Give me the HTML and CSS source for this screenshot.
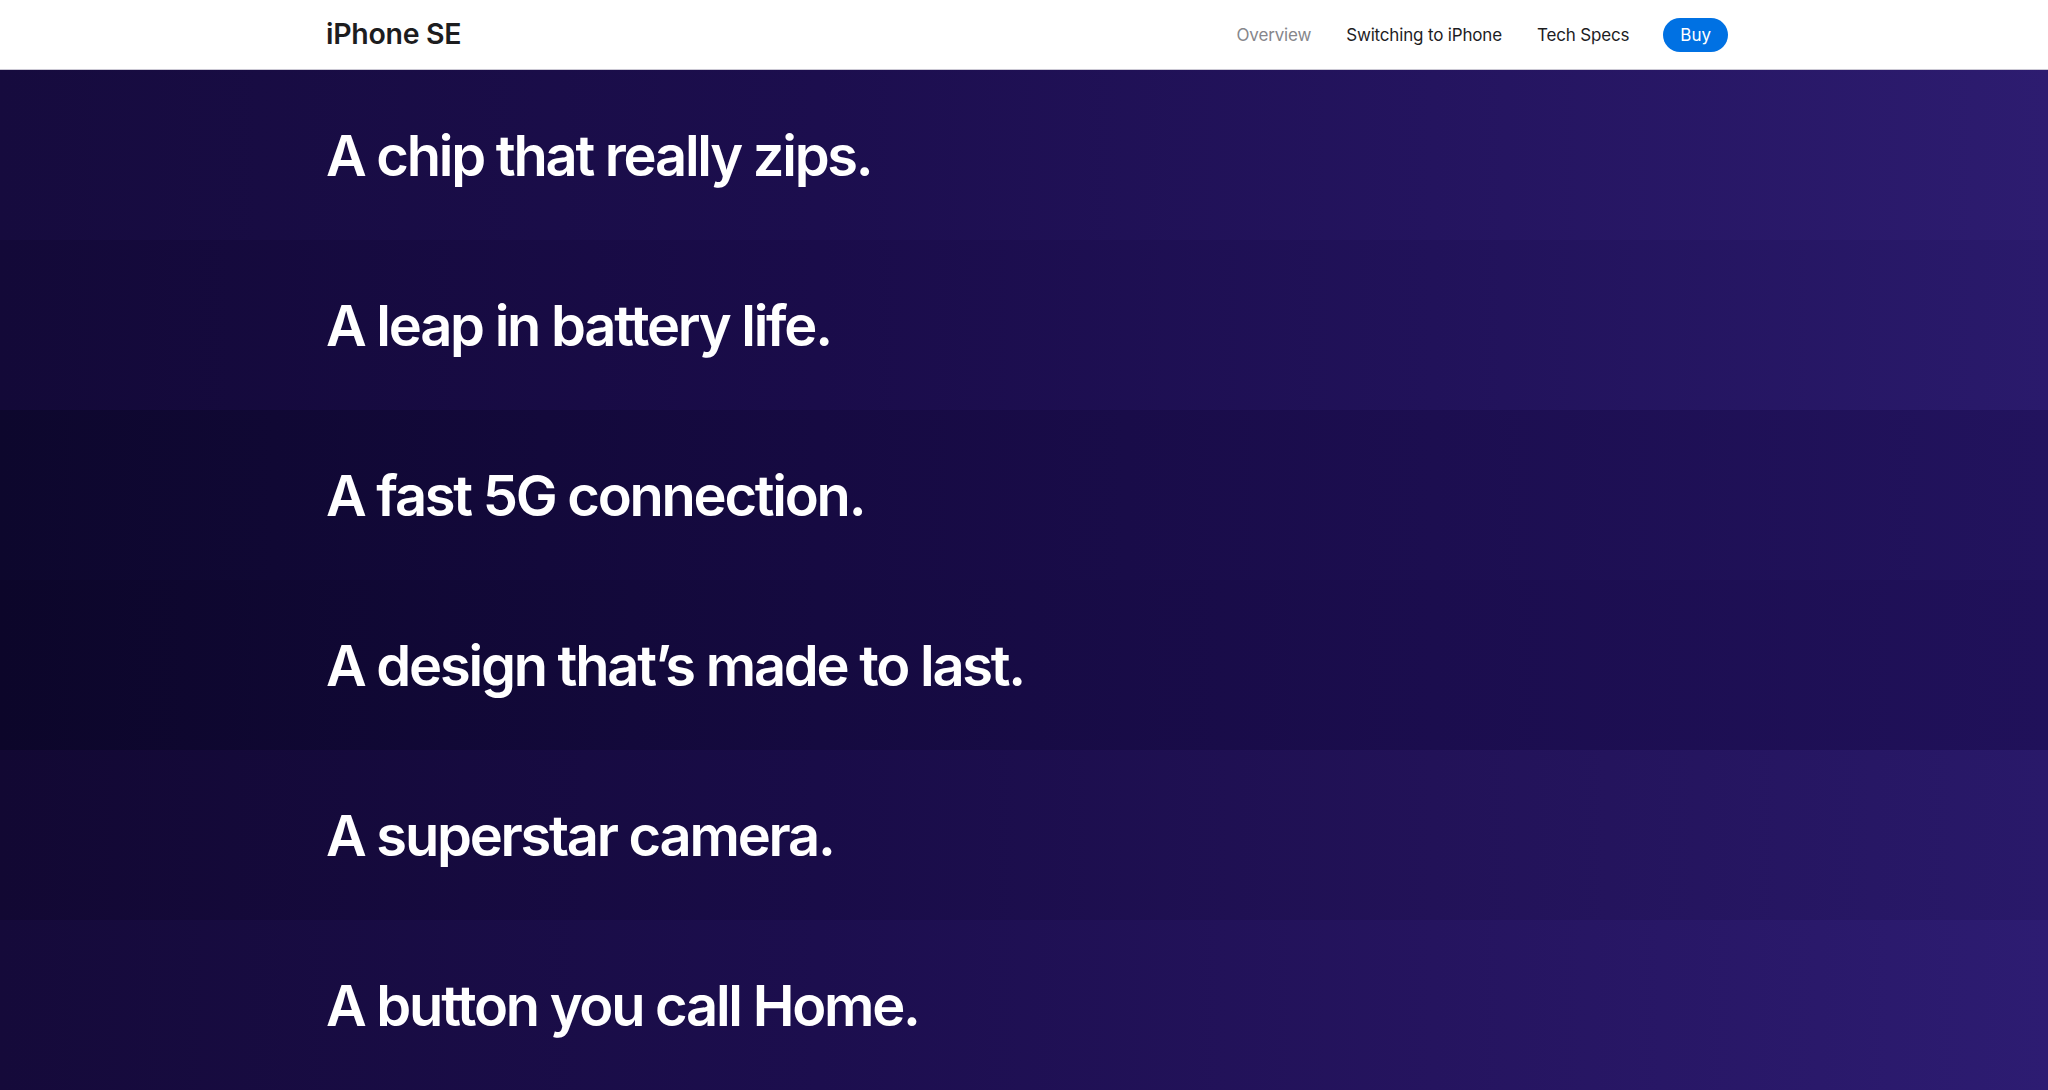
FILE: index.html
```html
<!DOCTYPE html>
<html lang="en">
<head>
<meta charset="utf-8">
<title>iPhone SE</title>
<link rel="stylesheet" href="styles.css">
</head>
<body>
<header class="localnav">
  <div class="localnav-inner">
    <a class="product-title" href="#">iPhone SE</a>
    <nav class="localnav-menu">
      <a class="localnav-link current" href="#">Overview</a>
      <a class="localnav-link" href="#">Switching to iPhone</a>
      <a class="localnav-link" href="#">Tech Specs</a>
      <a class="buy-button" href="#">Buy</a>
    </nav>
  </div>
</header>
<main class="features">
  <section class="band band-1"><div class="band-inner"><h2 class="headline">A chip that really zips.</h2></div></section>
  <section class="band band-2"><div class="band-inner"><h2 class="headline">A leap in battery life.</h2></div></section>
  <section class="band band-3"><div class="band-inner"><h2 class="headline">A fast 5G connection.</h2></div></section>
  <section class="band band-4"><div class="band-inner"><h2 class="headline">A design that’s made to last.</h2></div></section>
  <section class="band band-5"><div class="band-inner"><h2 class="headline">A superstar camera.</h2></div></section>
  <section class="band band-6"><div class="band-inner"><h2 class="headline">A button you call Home.</h2></div></section>
</main>
</body>
</html>
```
FILE: styles.css
```css
* { box-sizing: border-box; }
html, body { margin: 0; padding: 0; }
body {
  font-family: Inter, "Noto Sans", "Liberation Sans", sans-serif;
  background: #120a36;
  overflow: hidden;
}
a { text-decoration: none; }

.localnav {
  height: 70px;
  background: #ffffff;
  border-bottom: 1px solid #cbc8d4;
}
.localnav-inner {
  width: 1402px;
  height: 100%;
  margin-left: calc(50% - 698px);
  display: flex;
  align-items: center;
  justify-content: space-between;
}
.product-title {
  font-size: 28.5px;
  font-weight: 600;
  letter-spacing: -0.01em;
  color: #1d1d1f;
  margin-top: -2px;
}
.localnav-menu {
  display: flex;
  align-items: center;
  gap: 35px;
}
.localnav-link {
  font-size: 17px;
  font-weight: 400;
  color: #1d1d1f;
  letter-spacing: -0.01em;
}
.localnav-link.current { color: #86868b; }
.buy-button {
  display: flex;
  align-items: center;
  justify-content: center;
  height: 34px;
  padding: 0 17px;
  border-radius: 17px;
  background: #0071e3;
  color: #ffffff;
  font-size: 17px;
  margin-left: -1px;
}

.features { display: flex; flex-direction: column; }
.band { height: 170px; }
.band-inner {
  width: 1402px;
  height: 100%;
  margin-left: calc(50% - 698px);
  display: flex;
  align-items: center;
}
.headline {
  margin: 0;
  color: #ffffff;
  font-size: 56px;
  font-weight: 600;
  letter-spacing: -0.04em;
  line-height: 1;
  padding-top: 2px;
}

.band-1 { background: linear-gradient(90deg, #160b3e 0%, #1c0e4e 40%, #24145f 70%, #2d1c70 100%); }
.band-2 { background: linear-gradient(90deg, #130938 0%, #1a0c4a 40%, #21125a 70%, #2a1a6c 100%); }
.band-3 { background: linear-gradient(90deg, #0d072d 0%, #160a42 40%, #1c0e50 70%, #22135e 100%); }
.band-4 { background: linear-gradient(90deg, #0c062a 0%, #150a40 40%, #1b0d4e 70%, #20115a 100%); }
.band-5 { background: linear-gradient(90deg, #120833 0%, #190c48 40%, #221258 70%, #29196a 100%); }
.band-6 { background: linear-gradient(90deg, #150a3a 0%, #1c0e4e 40%, #25145f 70%, #2d1c72 100%); }
```
